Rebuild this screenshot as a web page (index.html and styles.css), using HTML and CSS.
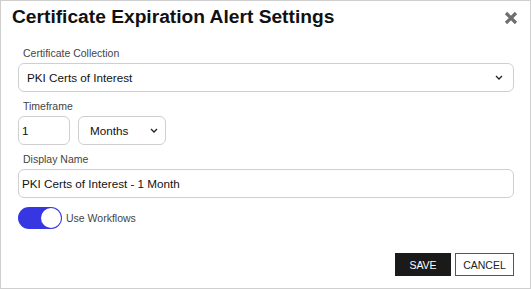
FILE: index.html
```html
<!DOCTYPE html>
<html lang="en">
<head>
    <meta charset="UTF-8">
    <meta name="viewport" content="width=device-width, initial-scale=1.0">
    <title>Certificate Expiration Alert Settings</title>
    <link rel="stylesheet" href="styles.css">
</head>
<body>
    <div class="dialog">
        <header class="dialog-header">
            <h1>Certificate Expiration Alert Settings</h1>
            <button class="close" type="button" aria-label="Close">
                <svg width="14" height="14" viewBox="0 0 14 14">
                    <path d="M2 2 L12 12 M12 2 L2 12" stroke="#6e6e6e" stroke-width="3.2" stroke-linecap="butt"/>
                </svg>
            </button>
        </header>

        <div class="field first">
            <label for="collection">Certificate Collection</label>
            <div class="select-wrap">
                <select id="collection" class="control wide">
                    <option>PKI Certs of Interest</option>
                </select>
                <svg class="chevron" width="8" height="5" viewBox="0 0 8 5">
                    <path d="M1 1 L4 4 L7 1" fill="none" stroke="#222" stroke-width="1.3"/>
                </svg>
            </div>
        </div>

        <div class="field">
            <label for="amount">Timeframe</label>
            <div class="row">
                <input type="text" id="amount" class="control amount" value="1">
                <div class="select-wrap">
                    <select id="unit" class="control unit">
                        <option>Months</option>
                    </select>
                    <svg class="chevron small" width="8" height="5" viewBox="0 0 8 5">
                        <path d="M1 1 L4 4 L7 1" fill="none" stroke="#222" stroke-width="1.3"/>
                    </svg>
                </div>
            </div>
        </div>

        <div class="field">
            <label for="display-name">Display Name</label>
            <input type="text" id="display-name" class="control wide text" value="PKI Certs of Interest - 1 Month">
        </div>

        <div class="toggle-row">
            <span class="toggle"><span class="knob"></span></span>
            <span class="toggle-label">Use Workflows</span>
        </div>

        <footer class="actions">
            <button type="button" class="btn save">SAVE</button>
            <button type="button" class="btn cancel">CANCEL</button>
        </footer>
    </div>
</body>
</html>
```

FILE: styles.css
```css
body {
    margin: 0;
    padding: 0;
    background: #fff;
    font-family: "Liberation Sans", Arial, sans-serif;
    color: #111;
}

.dialog {
    width: 531px;
    height: 289px;
    box-sizing: border-box;
    border: 1px solid #cfcfcf;
    padding: 5px 16px 0 17px;
}

.dialog-header {
    display: flex;
    justify-content: space-between;
    align-items: center;
    height: 22px;
}

h1 {
    margin: 0 0 0 -6px;
    font-size: 19.2px;
    font-weight: bold;
    color: #111;
}

.close {
    background: none;
    border: none;
    padding: 0;
    margin-right: -4px;
    margin-top: 2px;
    display: flex;
}

.field {
    margin-top: 8px;
}

.field.first {
    margin-top: 19px;
}

label {
    display: block;
    font-size: 10.5px;
    line-height: 12px;
    color: #444;
    padding-left: 5px;
    margin-bottom: 4px;
}

.control {
    box-sizing: border-box;
    height: 29px;
    border: 1px solid #cfcfcf;
    border-radius: 6px;
    background: #fff;
    font-family: "Liberation Sans", Arial, sans-serif;
    font-size: 11.7px;
    color: #111;
    padding: 0 4px 0 8px;
}

select.control {
    appearance: none;
    -webkit-appearance: none;
}

.select-wrap {
    position: relative;
}

.chevron {
    position: absolute;
    right: 11px;
    top: 12px;
    pointer-events: none;
}

.chevron.small {
    right: 8px;
}

.wide {
    display: block;
    width: 100%;
}

.text {
    padding-left: 3px;
}

.row {
    display: flex;
    gap: 8px;
}

.amount {
    width: 52px;
    padding-left: 3px;
}

.unit {
    width: 88px;
    padding-left: 11px;
}

.toggle-row {
    display: flex;
    align-items: center;
    gap: 4px;
    margin-top: 9px;
    height: 22px;
}

.toggle {
    display: flex;
    justify-content: flex-end;
    align-items: center;
    width: 44px;
    height: 22px;
    box-sizing: border-box;
    padding: 1px;
    border-radius: 11px;
    background: #3636e2;
}

.knob {
    width: 20px;
    height: 20px;
    border-radius: 50%;
    background: #fff;
}

.toggle-label {
    font-size: 10.5px;
    color: #444;
}

.actions {
    display: flex;
    justify-content: flex-end;
    gap: 4px;
    margin-top: 24px;
}

.btn {
    height: 23px;
    box-sizing: border-box;
    font-family: "Liberation Sans", Arial, sans-serif;
    font-size: 10.5px;
    padding: 0;
    cursor: pointer;
}

.save {
    width: 56px;
    background: #1a1a1a;
    color: #fff;
    border: 1px solid #1a1a1a;
}

.cancel {
    width: 59px;
    background: #fff;
    color: #222;
    border: 1px solid #555;
}
```
